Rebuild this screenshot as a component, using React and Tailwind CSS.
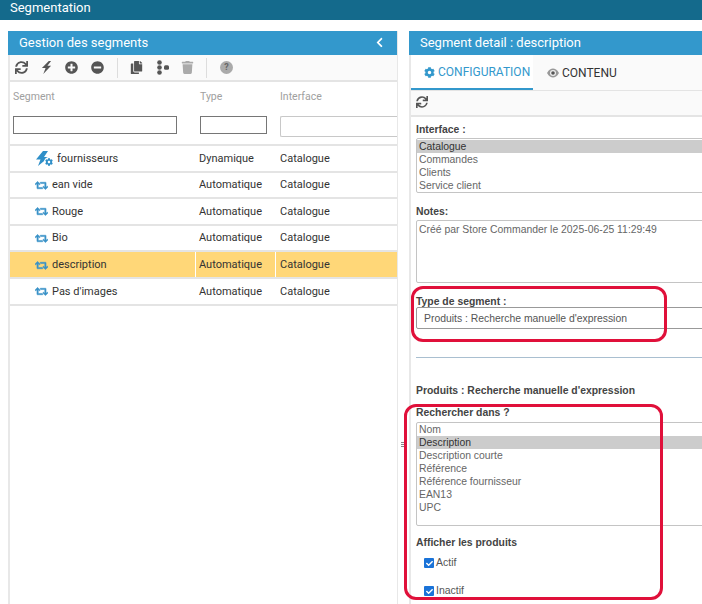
import { FaSync, FaPlusCircle, FaMinusCircle, FaCopy, FaTrash, FaChevronLeft, FaCog, FaRetweet, FaCheck } from 'react-icons/fa'

const segments = [
  { name: 'fournisseurs', type: 'Dynamique', dynamic: true },
  { name: 'ean vide', type: 'Automatique' },
  { name: 'Rouge', type: 'Automatique' },
  { name: 'Bio', type: 'Automatique' },
  { name: 'description', type: 'Automatique', selected: true },
  { name: "Pas d'images", type: 'Automatique' },
]

const interfaces = ['Catalogue', 'Commandes', 'Clients', 'Service client']
const searchIn = ['Nom', 'Description', 'Description courte', 'Référence', 'Référence fournisseur', 'EAN13', 'UPC']

function BoltIcon({ className }) {
  return (
    <svg className={className} viewBox="0 0 12 14" fill="currentColor">
      <polygon points="8.5,0 1,7.5 5,7.5 2.5,14 11,5 7,5 11,0" />
    </svg>
  )
}

function TreeIcon() {
  return (
    <svg width="12" height="15" viewBox="0 0 12 15" fill="#555">
      <circle cx="2.5" cy="2.5" r="2.3" />
      <circle cx="2.5" cy="7.5" r="2.3" />
      <circle cx="2.5" cy="12.5" r="2.3" />
      <rect x="7" y="5.2" width="5" height="4.6" rx="1.5" />
    </svg>
  )
}

function EyeIcon() {
  return (
    <svg width="12" height="10" viewBox="0 0 12 10">
      <path d="M0 5C2 1.5 4 0.5 6 0.5S10 1.5 12 5C10 8.5 8 9.5 6 9.5S2 8.5 0 5Z" fill="#999" />
      <circle cx="6" cy="5" r="3" fill="#eee" />
      <circle cx="6" cy="5" r="1.8" fill="#555" />
    </svg>
  )
}

function DynamicIcon() {
  return (
    <span className="relative ml-[26px] mr-[3px] h-[16px] w-[18px] text-[#2f8fc8]">
      <svg className="absolute left-0 top-0" width="13" height="15" viewBox="0 0 13 15" fill="currentColor">
        <polygon points="7,0 0,8.5 4.5,8.5 2,15 13,6 8,6 12,0" />
      </svg>
      <span className="absolute bottom-0 right-0 rounded-full bg-white p-[1px]">
        <FaCog className="text-[8px]" />
      </span>
    </span>
  )
}

function SegmentRow({ segment }) {
  return (
    <div className={`grid h-[26.6px] grid-cols-[186px_80px_1fr] items-center border-b-2 border-[#e4e4e4] text-[11px] text-[#333] ${segment.selected ? 'bg-[#ffd778]' : 'bg-white'}`}>
      <div className="flex h-full items-center border-r border-white pt-[1px]">
        {segment.dynamic ? (
          <DynamicIcon />
        ) : (
          <FaRetweet className="ml-[25px] mr-[4px] stroke-[25] text-[13px] text-[#3a92c8]" />
        )}
        <span>{segment.name}</span>
      </div>
      <div className="flex h-full items-center border-r border-white pl-[3px] pt-[1px]">{segment.type}</div>
      <div className="pl-[4px] pt-[1px]">Catalogue</div>
    </div>
  )
}

function Checkbox({ label }) {
  return (
    <div className="ml-[8px] flex h-[14px] items-center gap-[2px] text-[10.5px] text-[#555]">
      <span className="flex h-[10px] w-[10px] items-center justify-center rounded-[1px] bg-[#1a73d8] text-white">
        <FaCheck className="text-[7px]" />
      </span>
      {label}
    </div>
  )
}

function ListBox({ items, selected, className }) {
  return (
    <div className={`w-[320px] rounded-[2px] border border-[#c4c4c4] bg-white text-[10.4px] leading-[13px] text-[#666] ${className}`}>
      {items.map((item) => (
        <div key={item} className={`px-[2px] ${item === selected ? 'bg-[#cccccc] text-[#333]' : ''}`}>{item}</div>
      ))}
    </div>
  )
}

function FieldLabel({ className, children }) {
  return <div className={`text-[10.4px] font-bold leading-[13px] text-[#444] ${className}`}>{children}</div>
}

export default function App() {
  return (
    <div className="relative h-[604px] w-[702px] overflow-hidden bg-white font-['Roboto',sans-serif]">
      {/* Top bar */}
      <div className="flex h-[20px] items-center bg-[#146a8c] pb-[4px] pl-[10px] text-[13px] text-white">Segmentation</div>

      <div className="mt-[11px] flex items-start pl-[8px]">
        {/* Left panel */}
        <div className="flex h-[573px] w-[390px] flex-col border-l-2 border-r border-[#e8e8e8]">
          <div className="-ml-[2px] flex h-[24px] items-center justify-between bg-[#3398cc] pb-[1px] pl-[11px] pr-[12px] text-[13px] text-white">
            <span>Gestion des segments</span>
            <FaChevronLeft className="text-[11px]" />
          </div>

          <div className="flex h-[27px] items-center border-b-2 border-[#e4e4e4] bg-[#fafafa] pl-[5px] text-[#555]">
            <FaSync className="text-[13px]" />
            <BoltIcon className="ml-[13px] h-[13px] w-[11px]" />
            <FaPlusCircle className="ml-[13px] text-[13px]" />
            <FaMinusCircle className="ml-[13px] text-[13px]" />
            <span className="ml-[13px] h-[20px] border-l border-[#dddddd]" />
            <FaCopy className="ml-[12px] text-[13px]" />
            <span className="ml-[14px]"><TreeIcon /></span>
            <FaTrash className="ml-[12px] text-[13px] text-[#aaaaaa]" />
            <span className="ml-[12px] h-[20px] border-l border-[#dddddd]" />
            <span className="ml-[13px] flex h-[13px] w-[13px] items-center justify-center rounded-full bg-[#aaaaaa] text-[9px] font-bold text-[#666]">?</span>
          </div>

          {/* Column headers and filters */}
          <div className="h-[64px] border-b-2 border-[#e4e4e4]">
            <div className="grid h-[29px] grid-cols-[186px_80px_1fr] items-center text-[10.5px] text-[#a0a0a0]">
              <span className="pl-[3px]">Segment</span>
              <span className="pl-[4px]">Type</span>
              <span className="pl-[4px]">Interface</span>
            </div>
            <div className="mt-[5px] grid grid-cols-[186px_80px_1fr] items-start">
              <div className="ml-[3px] h-[18px] w-[164px] border border-[#767676] bg-white" />
              <div className="ml-[4px] h-[18px] w-[67px] border border-[#767676] bg-white" />
              <div className="ml-[4px] h-[21px] rounded-l-[2px] border border-r-0 border-[#c8c8c8] bg-white" />
            </div>
          </div>

          {segments.map((segment) => (
            <SegmentRow key={segment.name} segment={segment} />
          ))}
        </div>

        {/* Right panel */}
        <div className="ml-[11px] flex h-[573px] w-[293px] flex-col border-l-2 border-[#e8e8e8]">
          <div className="-ml-[2px] flex h-[24px] items-center bg-[#3398cc] pb-[1px] pl-[11px] text-[13px] text-white">Segment detail : description</div>

          <div className="flex h-[36px] items-stretch border-b border-[#e4e4e4] bg-[#fafafa] text-[12px]">
            <div className="flex w-[122px] items-center gap-[3px] border-b-2 border-[#3398cc] bg-white pl-[13px] pt-[1px] text-[#3398cc]">
              <FaCog className="text-[11px]" />
              CONFIGURATION
            </div>
            <div className="ml-[14px] flex items-center gap-[3px] pt-[1px] text-[#333]">
              <EyeIcon />
              CONTENU
            </div>
          </div>

          <div className="flex h-[26px] items-center border-b-2 border-[#e4e4e4] bg-[#fafafa] pb-[3px] pl-[5px] text-[#555]">
            <FaSync className="text-[12px]" />
          </div>

          <div className="pl-[5px] font-['Liberation_Sans',sans-serif]">
            <FieldLabel className="mt-[6px]">Interface :</FieldLabel>
            <ListBox items={interfaces} selected="Catalogue" className="mt-[2px] h-[55px] pt-[1px]" />

            <FieldLabel className="mt-[12px]">Notes:</FieldLabel>
            <div className="mt-[2px] h-[63px] w-[320px] rounded-[2px] border border-[#c4c4c4] p-[2px] text-[10.4px] leading-[13px] text-[#666]">
              Créé par Store Commander le 2025-06-25 11:29:49
            </div>

            <FieldLabel className="mt-[12px]">Type de segment :</FieldLabel>
            <div className="-mt-[1px] flex h-[22px] w-[320px] items-center rounded-[2px] border border-[#999] pl-[7px] pt-[1px] text-[10.4px] text-[#555]">
              Produits : Recherche manuelle d'expression
            </div>

            <div className="mt-[28px] h-px w-[320px] bg-[#a9bfd0]" />

            <FieldLabel className="mt-[26px]">Produits : Recherche manuelle d'expression</FieldLabel>

            <FieldLabel className="mt-[9px]">Rechercher dans ?</FieldLabel>
            <ListBox items={searchIn} selected="Description" className="mt-[3px] h-[104px]" />

            <FieldLabel className="mt-[10px]">Afficher les produits</FieldLabel>
            <div className="mt-[7px] flex flex-col gap-[14px]">
              <Checkbox label="Actif" />
              <Checkbox label="Inactif" />
            </div>
          </div>
        </div>
      </div>

      {/* Splitter grip */}
      <div className="absolute left-[401px] top-[442px] flex h-[5px] w-[3px] flex-col justify-between">
        <span className="h-px bg-[#888]" />
        <span className="h-px bg-[#888]" />
        <span className="h-px bg-[#888]" />
      </div>

      {/* Red annotation frames */}
      <div className="absolute left-[411px] top-[286px] h-[56px] w-[256px] rounded-[12px] border-[3px] border-[#e0103a]" />
      <div className="absolute left-[404px] top-[404px] h-[196px] w-[259px] rounded-[12px] border-[3px] border-[#e0103a]" />
    </div>
  )
}
